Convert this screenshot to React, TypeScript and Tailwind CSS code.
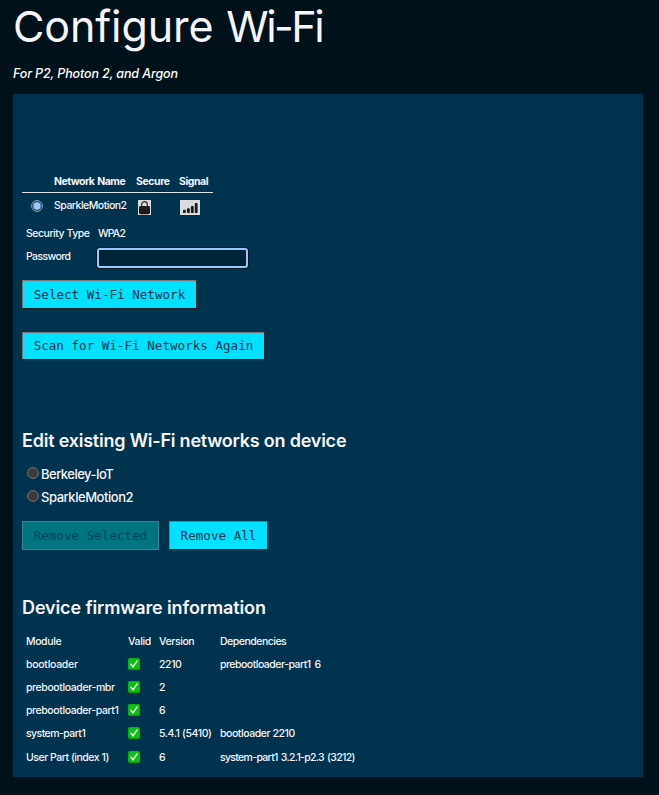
import React from "react";

const button =
  "flex items-center justify-center border border-t-[#767676] border-l-[#767676] border-r-[#101c24] border-b-[#101c24] bg-[#00e1ff] text-[#00334e] font-['DejaVu_Sans_Mono',monospace] text-[12.5px] leading-none tracking-[0.05px] whitespace-pre";

function Radio({ checked = false }: { checked?: boolean }) {
  return checked ? (
    <svg viewBox="0 0 12 12" className="h-3 w-3 shrink-0">
      <circle cx="6" cy="6" r="5.4" fill="#26384a" stroke="#8aa9cc" strokeWidth="1" />
      <circle cx="6" cy="6" r="3.7" fill="#99c8ff" />
    </svg>
  ) : (
    <svg viewBox="0 0 12 12" className="h-3 w-3 shrink-0">
      <circle cx="6" cy="6" r="5.4" fill="#3b3b3b" stroke="#767676" strokeWidth="1" />
    </svg>
  );
}

function LockIcon() {
  return (
    <svg viewBox="0 0 13 15" className="h-[15px] w-[13px]">
      <rect width="13" height="15" fill="#dcdcdc" />
      <path d="M3.7 7V4.4a2.8 2.8 0 0 1 5.6 0V7" fill="none" stroke="#2b2b2b" strokeWidth="1.2" />
      <rect x="1" y="6" width="11" height="8.2" rx="1.4" fill="#1b1b1b" />
    </svg>
  );
}

function SignalIcon() {
  return (
    <svg viewBox="0 0 20 15" className="h-[15px] w-5">
      <rect width="20" height="15" fill="#dcdcdc" />
      <g fill="#1b1b1b">
        <rect x="3" y="9.8" width="2.8" height="3.2" rx="0.8" />
        <rect x="7" y="8.2" width="2.8" height="4.8" rx="0.8" />
        <rect x="10.9" y="6" width="2.8" height="7" rx="0.8" />
        <rect x="14.8" y="3" width="2.8" height="10" rx="0.8" />
      </g>
    </svg>
  );
}

function ValidIcon() {
  return (
    <svg viewBox="0 0 12 12" className="mb-px h-3 w-3">
      <rect width="12" height="12" rx="1.6" fill="#0a9c10" />
      <rect x="0.5" y="0.6" width="11" height="10.2" rx="1.2" fill="#0cc113" />
      <path d="M2.9 6.2 5 8.8 9.1 2.8" fill="none" stroke="#fff" strokeWidth="1.3" strokeLinecap="round" />
    </svg>
  );
}

const modules = [
  { name: "bootloader", version: "2210", deps: "prebootloader-part1 6", height: "h-[23px]", nameTrack: "tracking-[-0.28px]", depTrack: "tracking-[-0.5px] [word-spacing:1.5px]" },
  { name: "prebootloader-mbr", version: "2", deps: "", height: "h-[23px]", nameTrack: "tracking-[-0.4px]", depTrack: "" },
  { name: "prebootloader-part1", version: "6", deps: "", height: "h-[23px]", nameTrack: "tracking-[-0.41px]", depTrack: "" },
  { name: "system-part1", version: "5.4.1 (5410)", deps: "bootloader 2210", height: "h-[23px]", nameTrack: "tracking-[-0.56px]", depTrack: "tracking-[-0.44px]" },
  { name: "User Part (index 1)", version: "6", deps: "system-part1 3.2.1-p2.3 (3212)", height: "h-[24px] pt-px", nameTrack: "tracking-[-0.48px]", depTrack: "tracking-[-0.68px] [word-spacing:1px]" },
];

export default function App() {
  return (
    <main className="h-[795px] w-[659px] overflow-hidden bg-[#00111a] pl-[13px] font-['Inter',sans-serif] text-[#f5f5fa]">
      <h1 className="h-[54px] whitespace-nowrap text-[43px] leading-[52px]">
        <span className="tracking-[-0.1px]">Configure</span>
        <span className="tracking-[-2.5px] [word-spacing:3.3px]"> Wi-Fi</span>
      </h1>
      <p className="mt-[11px] h-[18px] whitespace-nowrap text-[12.5px] font-medium italic leading-[18px] tracking-[-0.13px] text-white">
        For P2, Photon 2, and Argon
      </p>
      <section className="mt-[11px] h-[683px] w-[630px] bg-[#00334e] pl-[9px] pt-[78px] text-[10.5px] font-medium tracking-[-0.4px]">
        <div className="flex h-[21px] w-[191px] items-center whitespace-nowrap border-b border-[#dfe6ea] pl-8 font-bold tracking-[-0.53px] [word-spacing:1px]">
          <span className="w-[82px]">Network Name</span>
          <span className="w-[43px] tracking-[-0.4px]">Secure</span>
          <span className="tracking-[-0.45px]">Signal</span>
        </div>
        <div className="flex h-[29px] items-center whitespace-nowrap pl-[9px]">
          <span className="pb-[4px]"><Radio checked /></span>
          <span className="ml-[11px] w-[84px] pb-[3px] tracking-[-0.5px]">SparkleMotion2</span>
          <span className="w-[42px]"><LockIcon /></span>
          <span><SignalIcon /></span>
        </div>
        <div className="flex h-[24px] items-center whitespace-nowrap pl-1">
          <span className="w-[72px] tracking-[-0.48px]">Security Type</span>
          <span className="tracking-[-0.8px]">WPA2</span>
        </div>
        <div className="flex h-[24px] items-center pl-1">
          <span className="w-[70px] pb-[2px] tracking-[-0.6px]">Password</span>
          <div className="mb-px h-[22px] w-[153px] shrink-0 rounded-[4px] border border-[#101820] bg-[#101820]">
            <div className="h-full w-full rounded-[3px] border-2 border-[#99c8ff] bg-[#002438]" />
          </div>
        </div>
        <button className={`${button} mt-[10px] h-[29px] w-[175px] pt-px`}>Select Wi-Fi Network</button>
        <button className={`${button} mt-[23px] h-[28px] w-[243px]`}>Scan for Wi-Fi Networks Again</button>
        <h2 className="mt-[69px] h-6 whitespace-nowrap text-[18px] font-semibold leading-6 tracking-[-0.22px]">
          Edit existing Wi-Fi networks on device
        </h2>
        <div className="mt-[10px] flex h-[23px] items-center pl-[5px] text-[13px]">
          <span className="mb-[3px]"><Radio /></span>
          <span className="ml-[2px] pt-px tracking-[-0.52px]">Berkeley-IoT</span>
        </div>
        <div className="flex h-[23px] items-center pl-[5px] text-[13px]">
          <span className="mb-[3px]"><Radio /></span>
          <span className="ml-[2px] pt-px tracking-[-0.45px]">SparkleMotion2</span>
        </div>
        <div className="mt-[12px] flex gap-[10px]">
          <button disabled className="flex h-[29px] w-[137px] items-center justify-center whitespace-pre border border-[#338791] bg-[#00747f] pt-px font-['DejaVu_Sans_Mono',monospace] text-[12.5px] leading-none tracking-[0.05px] text-[#00445c]">
            Remove Selected
          </button>
          <button className={`${button} h-[29px] w-[99px] pt-px`}>Remove All</button>
        </div>
        <h2 className="mt-[46px] h-6 whitespace-nowrap text-[18px] font-semibold leading-6 tracking-[-0.12px]">
          Device firmware information
        </h2>
        <div className="mt-[10px] flex h-[23px] items-center whitespace-nowrap pl-1">
          <span className="w-[102px]">Module</span>
          <span className="w-[31px] tracking-[-0.35px]">Valid</span>
          <span className="w-[61px]">Version</span>
          <span className="tracking-[-0.5px]">Dependencies</span>
        </div>
        {modules.map((m) => (
          <div key={m.name} className={`flex ${m.height} items-center whitespace-nowrap pl-1`}>
            <span className={`w-[102px] ${m.nameTrack}`}>{m.name}</span>
            <span className="w-[31px]"><ValidIcon /></span>
            <span className="w-[61px]">{m.version}</span>
            <span className={m.depTrack}>{m.deps}</span>
          </div>
        ))}
      </section>
    </main>
  );
}
